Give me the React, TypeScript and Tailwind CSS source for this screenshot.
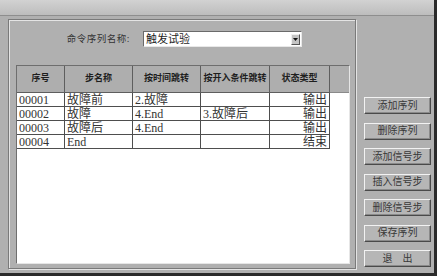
import { FC } from "react";

const font = { fontFamily: '"Liberation Serif", "Noto Sans CJK SC", serif' };

interface propsBtn {
  label: string;
}

const SideButton: FC<propsBtn> = ({ label }) => {
  return (
    <button className="h-[17px] w-[67px] bg-[#b6b6b6] border border-t-[#f2f2f2] border-l-[#f2f2f2] border-b-[#4a4a4a] border-r-[#4a4a4a] shadow-[inset_-1px_-1px_0_#8a8a8a] flex items-center justify-center text-[10px] leading-none text-[#383838] whitespace-pre">
      {label}
    </button>
  );
};

const rows = [
  ["00001", "故障前", "2.故障", "", "输出"],
  ["00002", "故障", "4.End", "3.故障后", "输出"],
  ["00003", "故障后", "4.End", "", "输出"],
  ["00004", "End", "", "", "结束"],
];

const headers = ["序号", "步名称", "按时间跳转", "按开入条件跳转", "状态类型"];
const widths = ["w-[48px]", "w-[68px]", "w-[68px]", "w-[69px]", "w-[60px]"];

export default function App() {
  return (
    <div className="w-[437px] h-[276px] bg-[#2a2a2a] overflow-hidden" style={font}>
      <div className="w-[434px] h-[273px] bg-[#b0b0b0] flex flex-col">
        {/* title strip */}
        <div className="h-[16px] bg-gradient-to-b from-[#d2d2d2] to-[#bdbdbd] border-b border-[#8e8e8e]" />

        <div className="flex flex-1 pl-[8px] pt-[3px] pb-[4px]">
          {/* group box */}
          <div className="w-[348px] h-full border border-[#7a7a7a] shadow-[inset_1px_1px_0_#e4e4e4,1px_1px_0_#e4e4e4] flex flex-col pl-[7px] pr-[5px] pb-[4px]">
            <div className="flex items-center h-[16px] mt-[11px] mb-[18px]">
              <span className="w-[127px] text-right pr-[13px] text-[9.5px] text-[#333] tracking-[0.5px]">命令序列名称:</span>
              <div className="w-[159px] h-[16px] bg-white border border-t-[#6a6a6a] border-l-[#6a6a6a] border-b-[#e8e8e8] border-r-[#e8e8e8] flex items-center justify-between pl-[2px] pr-[1px]">
                <span className="text-[11px] leading-none text-[#1e1e1e]">触发试验</span>
                <span className="w-[9px] h-[11px] bg-[#c4c4c4] border border-t-[#f0f0f0] border-l-[#f0f0f0] border-b-[#555] border-r-[#555] flex items-center justify-center">
                  <svg width="5" height="3" viewBox="0 0 5 3">
                    <path d="M0 0 L5 0 L2.5 3 Z" fill="#111" />
                  </svg>
                </span>
              </div>
            </div>

            {/* list view */}
            <div className="flex-1 bg-white border border-t-[#6e6e6e] border-l-[#6e6e6e] border-b-[#e6e6e6] border-r-[#e6e6e6]">
              <div className="flex h-[27px]">
                {headers.map((h, i) => (
                  <div
                    key={i}
                    className={`${widths[i]} bg-[#aeaeae] border-r border-b border-[#5e5e5e] flex items-center justify-center text-[9px] font-bold text-[#1e1e1e] whitespace-nowrap`}
                  >
                    {h}
                  </div>
                ))}
                <div className="flex-1 bg-[#aeaeae] border-b border-[#8a8a8a]" />
              </div>
              {rows.map((r, ri) => (
                <div key={ri} className="flex h-[14px]">
                  {r.map((c, ci) => (
                    <div
                      key={ci}
                      className={`${widths[ci]} border-r border-b border-[#4e4e4e] flex items-center px-[2px] text-[12px] leading-none text-[#333] whitespace-nowrap ${ci === 4 ? "justify-end" : ""}`}
                    >
                      {c}
                    </div>
                  ))}
                </div>
              ))}
            </div>
          </div>

          {/* right buttons */}
          <div className="flex flex-col gap-[8.5px] pl-[8px] pt-[78px]">
            <SideButton label="添加序列" />
            <SideButton label="删除序列" />
            <SideButton label="添加信号步" />
            <SideButton label="插入信号步" />
            <SideButton label="删除信号步" />
            <SideButton label="保存序列" />
            <SideButton label={"退    出"} />
          </div>
        </div>
      </div>
    </div>
  );
}
